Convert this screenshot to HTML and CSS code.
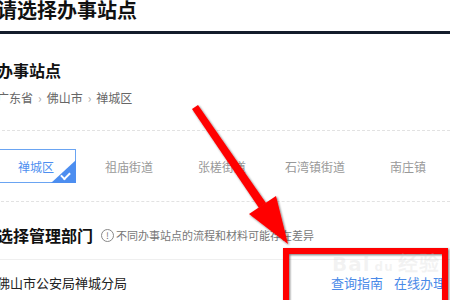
FILE: index.html
```html
<!DOCTYPE html>
<html lang="zh-CN">
<head>
  <meta charset="UTF-8">
  <title>请选择办事站点</title>
  <link rel="stylesheet" href="styles.css">
</head>
<body>

  <div class="page">
    <h1 class="page-title">请选择办事站点</h1>

    <div class="section">
      <h2>办事站点</h2>
      <div class="crumbs">
        <span>广东省</span><i>&rsaquo;</i><span>佛山市</span><i>&rsaquo;</i><span>禅城区</span>
      </div>
    </div>

    <div class="tabs">
      <div class="tab active">禅城区<span class="corner"></span></div>
      <div class="tab">祖庙街道</div>
      <div class="tab">张槎街道</div>
      <div class="tab">石湾镇街道</div>
      <div class="tab">南庄镇</div>
    </div>

    <div class="dept-head">
      <h2>选择管理部门</h2>
      <span class="tip"><b>!</b>不同办事站点的流程和材料可能存在差异</span>
    </div>

    <div class="dept-row">
      <span class="dept-name">佛山市公安局禅城分局</span>
      <span class="links"><a href="#">查询指南</a><a href="#">在线办理</a></span>
    </div>
  </div>

  <!-- 标注：红色箭头和方框 -->
  <svg class="mark" width="450" height="300" viewBox="0 0 450 300">
    <defs>
      <filter id="sh" x="-20%" y="-20%" width="140%" height="140%">
        <feDropShadow dx="1" dy="1" stdDeviation="1.2" flood-color="#000" flood-opacity="0.55"/>
      </filter>
    </defs>
    <g filter="url(#sh)" fill="#ff0000">
      <polygon points="192,109 198,105 266,203 259,208"/>
      <polygon points="249,214 276,196 288,244"/>
      <path d="M283 248 H448 V306 H283 Z M289 254 V306 H442 V254 Z" fill-rule="evenodd"/>
    </g>
  </svg>
  <div class="watermark">Bai<span>du</span>经验</div>

</body>
</html>
```

FILE: styles.css
```css
body {
  margin: 0;
  background: #fff;
  font-family: "Noto Sans CJK SC", "Noto Sans", sans-serif;
  color: #222;
  width: 450px;
  height: 300px;
  overflow: hidden;
  position: relative;
}

.page {
  margin-left: -3px;
}

.page-title {
  margin: -4px 0 0;
  font-size: 20px;
  line-height: 28px;
  font-weight: bold;
  color: #111;
  padding-bottom: 7px;
  border-bottom: 3px solid #141d2b;
}

.section {
  padding-bottom: 23px;
  border-bottom: 1px dashed #e2e2e2;
}

h2 {
  margin: 0;
  font-size: 16px;
  line-height: 24px;
  font-weight: bold;
  color: #111;
}

.section h2 {
  margin-top: 24px;
}

.crumbs {
  margin-top: 7px;
  font-size: 12px;
  line-height: 18px;
  color: #666;
}

.crumbs i {
  font-style: normal;
  color: #aaa;
  margin: 0 5px;
}

.tabs {
  display: flex;
  gap: 13px;
  margin-left: -1px;
  padding: 18px 0 18px;
  border-bottom: 1px dashed #e2e2e2;
}

.tab {
  position: relative;
  width: 80px;
  height: 34px;
  box-sizing: border-box;
  display: flex;
  align-items: center;
  justify-content: center;
  font-size: 12px;
  color: #999;
  flex-shrink: 0;
}

.tab.active {
  border: 1px solid #6aa4f2;
  color: #4d8ef0;
}

.corner {
  position: absolute;
  right: -1px;
  bottom: -1px;
  width: 25px;
  height: 23px;
  background: #4d8ef0;
  clip-path: polygon(100% 0, 100% 100%, 0 100%);
}

.corner::after {
  content: "";
  position: absolute;
  right: 6px;
  bottom: 5px;
  width: 7px;
  height: 4px;
  border-left: 2px solid #fff;
  border-bottom: 2px solid #fff;
  transform: rotate(-45deg);
}

.dept-head {
  display: flex;
  align-items: center;
  margin-top: 21px;
  padding-bottom: 12px;
  border-bottom: 1px solid #efefef;
}

.tip {
  display: flex;
  align-items: center;
  margin-left: 8px;
  font-size: 11px;
  color: #777;
}

.tip b {
  width: 11px;
  height: 11px;
  border: 1px solid #888;
  border-radius: 50%;
  font-size: 9px;
  line-height: 11px;
  text-align: center;
  margin-right: 2px;
  font-weight: normal;
}

.dept-row {
  display: flex;
  justify-content: space-between;
  align-items: center;
  padding: 13px 4px 0 0;
  font-size: 13px;
  line-height: 20px;
}

.dept-name {
  color: #222;
}

.links a {
  color: #4a8ae8;
  text-decoration: none;
  margin-left: 11px;
}

.mark {
  position: absolute;
  left: 0;
  top: 0;
}

.watermark {
  position: absolute;
  left: 332px;
  top: 248px;
  font-family: "DejaVu Sans", sans-serif;
  font-size: 20px;
  font-weight: bold;
  color: rgba(200, 200, 200, 0.22);
  letter-spacing: 1px;
}

.watermark span {
  font-size: 12px;
  margin: 0 4px;
}
```
